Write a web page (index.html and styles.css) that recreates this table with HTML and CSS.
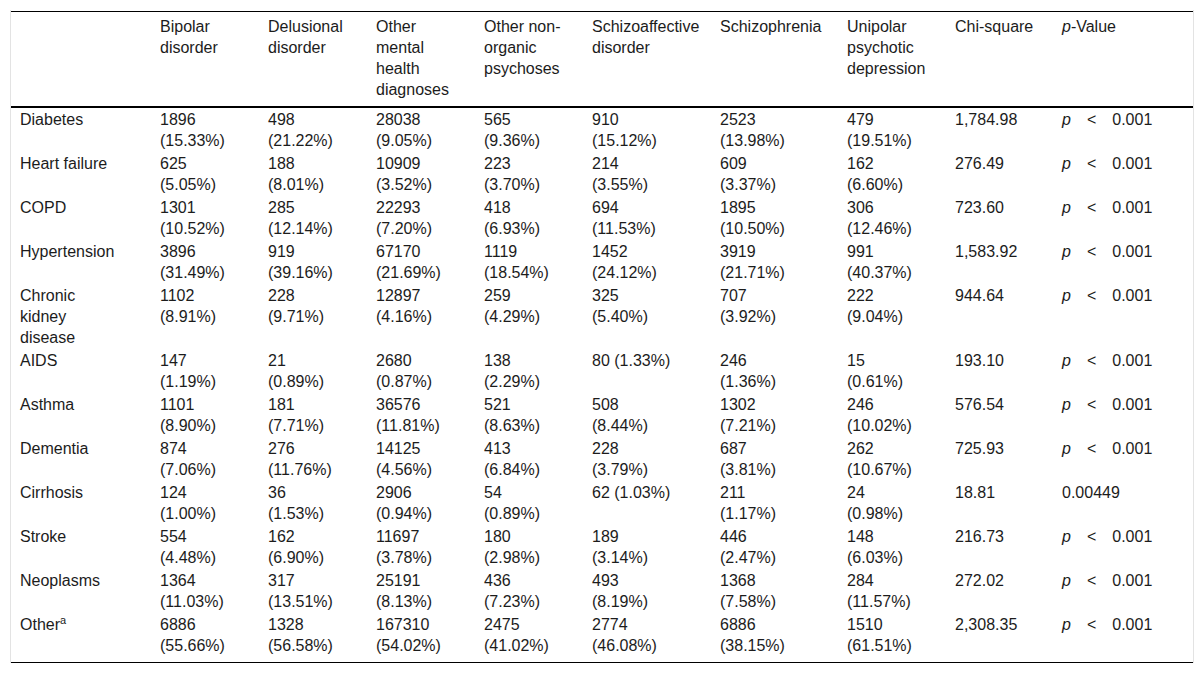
FILE: index.html
```html
<!DOCTYPE html>
<html lang="en">
<head>
<meta charset="utf-8">
<title>Comorbidities by diagnosis</title>
<link rel="stylesheet" href="styles.css">
</head>
<body>
<div class="wrap">
<table class="data">
<colgroup>
<col class="c-label"><col class="c-n"><col class="c-n"><col class="c-n"><col class="c-n"><col class="c-wide"><col class="c-wide2"><col class="c-n"><col class="c-chi"><col class="c-p">
</colgroup>
<thead>
<tr>
<th></th>
<th>Bipolar<br>disorder</th>
<th>Delusional<br>disorder</th>
<th>Other<br>mental<br>health<br>diagnoses</th>
<th>Other non-<br>organic<br>psychoses</th>
<th>Schizoaffective<br>disorder</th>
<th>Schizophrenia</th>
<th>Unipolar<br>psychotic<br>depression</th>
<th>Chi-square</th>
<th><i>p</i>-Value</th>
</tr>
</thead>
<tbody>
<tr><td>Diabetes</td><td>1896<br>(15.33%)</td><td>498<br>(21.22%)</td><td>28038<br>(9.05%)</td><td>565<br>(9.36%)</td><td>910<br>(15.12%)</td><td>2523<br>(13.98%)</td><td>479<br>(19.51%)</td><td>1,784.98</td><td><i>p</i><span class="lt">&lt;</span>0.001</td></tr>
<tr><td>Heart failure</td><td>625<br>(5.05%)</td><td>188<br>(8.01%)</td><td>10909<br>(3.52%)</td><td>223<br>(3.70%)</td><td>214<br>(3.55%)</td><td>609<br>(3.37%)</td><td>162<br>(6.60%)</td><td>276.49</td><td><i>p</i><span class="lt">&lt;</span>0.001</td></tr>
<tr><td>COPD</td><td>1301<br>(10.52%)</td><td>285<br>(12.14%)</td><td>22293<br>(7.20%)</td><td>418<br>(6.93%)</td><td>694<br>(11.53%)</td><td>1895<br>(10.50%)</td><td>306<br>(12.46%)</td><td>723.60</td><td><i>p</i><span class="lt">&lt;</span>0.001</td></tr>
<tr><td>Hypertension</td><td>3896<br>(31.49%)</td><td>919<br>(39.16%)</td><td>67170<br>(21.69%)</td><td>1119<br>(18.54%)</td><td>1452<br>(24.12%)</td><td>3919<br>(21.71%)</td><td>991<br>(40.37%)</td><td>1,583.92</td><td><i>p</i><span class="lt">&lt;</span>0.001</td></tr>
<tr><td>Chronic<br>kidney<br>disease</td><td>1102<br>(8.91%)</td><td>228<br>(9.71%)</td><td>12897<br>(4.16%)</td><td>259<br>(4.29%)</td><td>325<br>(5.40%)</td><td>707<br>(3.92%)</td><td>222<br>(9.04%)</td><td>944.64</td><td><i>p</i><span class="lt">&lt;</span>0.001</td></tr>
<tr><td>AIDS</td><td>147<br>(1.19%)</td><td>21<br>(0.89%)</td><td>2680<br>(0.87%)</td><td>138<br>(2.29%)</td><td>80 (1.33%)</td><td>246<br>(1.36%)</td><td>15<br>(0.61%)</td><td>193.10</td><td><i>p</i><span class="lt">&lt;</span>0.001</td></tr>
<tr><td>Asthma</td><td>1101<br>(8.90%)</td><td>181<br>(7.71%)</td><td>36576<br>(11.81%)</td><td>521<br>(8.63%)</td><td>508<br>(8.44%)</td><td>1302<br>(7.21%)</td><td>246<br>(10.02%)</td><td>576.54</td><td><i>p</i><span class="lt">&lt;</span>0.001</td></tr>
<tr><td>Dementia</td><td>874<br>(7.06%)</td><td>276<br>(11.76%)</td><td>14125<br>(4.56%)</td><td>413<br>(6.84%)</td><td>228<br>(3.79%)</td><td>687<br>(3.81%)</td><td>262<br>(10.67%)</td><td>725.93</td><td><i>p</i><span class="lt">&lt;</span>0.001</td></tr>
<tr><td>Cirrhosis</td><td>124<br>(1.00%)</td><td>36<br>(1.53%)</td><td>2906<br>(0.94%)</td><td>54<br>(0.89%)</td><td>62 (1.03%)</td><td>211<br>(1.17%)</td><td>24<br>(0.98%)</td><td>18.81</td><td>0.00449</td></tr>
<tr><td>Stroke</td><td>554<br>(4.48%)</td><td>162<br>(6.90%)</td><td>11697<br>(3.78%)</td><td>180<br>(2.98%)</td><td>189<br>(3.14%)</td><td>446<br>(2.47%)</td><td>148<br>(6.03%)</td><td>216.73</td><td><i>p</i><span class="lt">&lt;</span>0.001</td></tr>
<tr><td>Neoplasms</td><td>1364<br>(11.03%)</td><td>317<br>(13.51%)</td><td>25191<br>(8.13%)</td><td>436<br>(7.23%)</td><td>493<br>(8.19%)</td><td>1368<br>(7.58%)</td><td>284<br>(11.57%)</td><td>272.02</td><td><i>p</i><span class="lt">&lt;</span>0.001</td></tr>
<tr class="last"><td>Other<sup>a</sup></td><td>6886<br>(55.66%)</td><td>1328<br>(56.58%)</td><td>167310<br>(54.02%)</td><td>2475<br>(41.02%)</td><td>2774<br>(46.08%)</td><td>6886<br>(38.15%)</td><td>1510<br>(61.51%)</td><td>2,308.35</td><td><i>p</i><span class="lt">&lt;</span>0.001</td></tr>
</tbody>
</table>
</div>
</body>
</html>
```

FILE: styles.css
```css
html, body {
  margin: 0;
  padding: 0;
  background: #ffffff;
}

body {
  font-family: "Liberation Sans", Arial, sans-serif;
  font-size: 16px;
  color: #1c1c1c;
}

.wrap {
  margin: 10px 0 0 10px;
  width: 1182px;
  padding-top: 1px;
  border-left: 1px solid #e3e3e3;
  border-right: 1px solid #e3e3e3;
}

.data {
  width: 1182px;
  table-layout: fixed;
  border-collapse: collapse;
  border-top: 1px solid #000;
  border-bottom: 1px solid #000;
}

.c-label { width: 140px; }
.c-n { width: 108px; }
.c-wide { width: 128px; }
.c-wide2 { width: 127px; }
.c-chi { width: 107px; }
.c-p { width: 140px; }

.data th,
.data td {
  text-align: left;
  vertical-align: top;
  font-weight: normal;
  line-height: 21px;
  white-space: nowrap;
  padding: 1px 0 1px 9px;
}

.data thead th {
  padding-top: 4px;
  padding-bottom: 6px;
  border-bottom: 2px solid #000;
}

.data tr.last td {
  padding-bottom: 6px;
}

.data sup {
  font-size: 11px;
  line-height: 0;
  vertical-align: 6px;
}

.lt {
  display: inline-block;
  margin: 0 16px 0 16px;
}
```
